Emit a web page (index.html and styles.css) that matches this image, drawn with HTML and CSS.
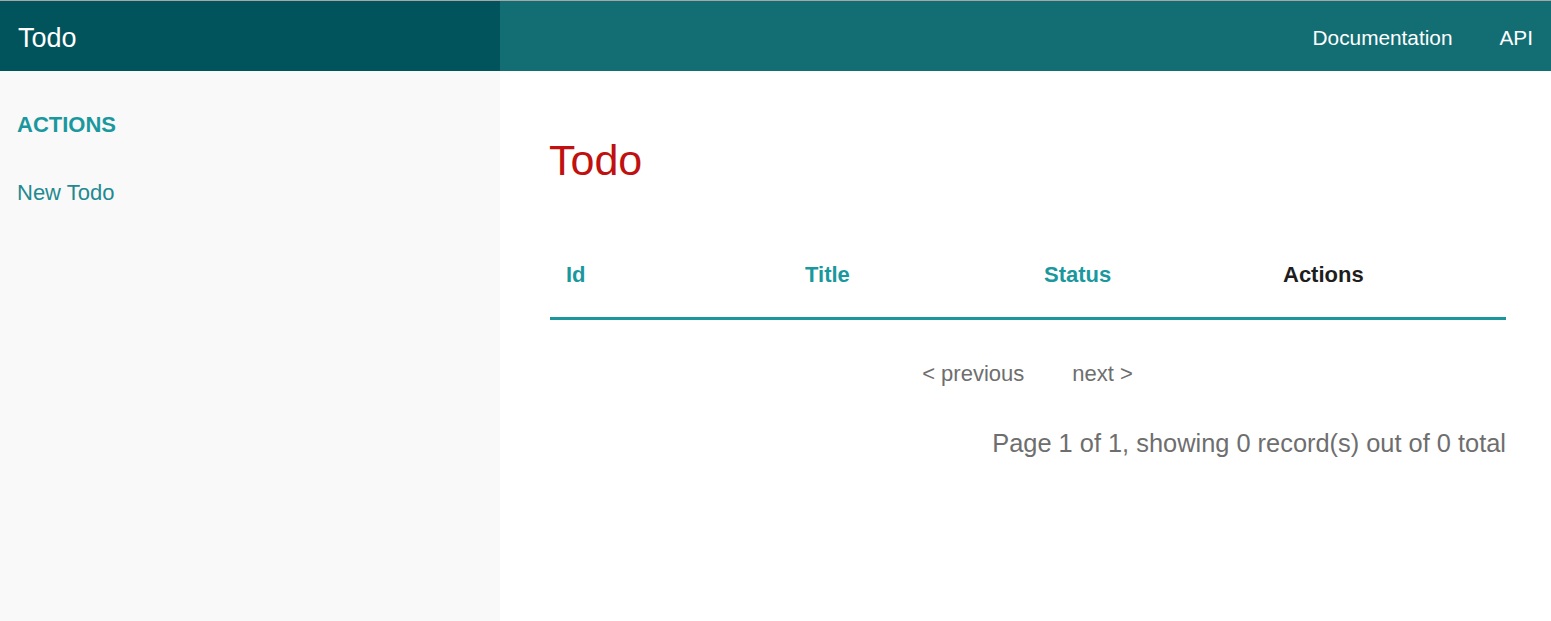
FILE: index.html
```html
<!DOCTYPE html>
<html lang="en">
<head>
<meta charset="utf-8">
<title>Todo</title>
<link rel="stylesheet" href="styles.css">
</head>
<body>
<div class="app">
  <header class="topbar">
    <div class="brand">Todo</div>
    <nav class="topnav">
      <a href="#">Documentation</a>
      <a href="#">API</a>
    </nav>
  </header>
  <div class="layout">
    <aside class="sidebar">
      <h3 class="side-title">ACTIONS</h3>
      <a class="side-link" href="#">New Todo</a>
    </aside>
    <main class="content">
      <h1 class="page-title">Todo</h1>
      <table class="grid">
        <thead>
          <tr>
            <th class="sortable">Id</th>
            <th class="sortable">Title</th>
            <th class="sortable">Status</th>
            <th>Actions</th>
          </tr>
        </thead>
        <tbody></tbody>
      </table>
      <div class="pager">
        <a href="#">&lt; previous</a>
        <a href="#">next &gt;</a>
      </div>
      <div class="summary">Page 1 of 1, showing 0 record(s) out of 0 total</div>
    </main>
  </div>
</div>
</body>
</html>
```

FILE: styles.css
```css
html, body {
  margin: 0;
  padding: 0;
  height: 100%;
}
body {
  font-family: "Liberation Sans", Arial, Helvetica, sans-serif;
  background: #ffffff;
  border-top: 1px solid #a6a6a6;
  box-sizing: border-box;
}
.app {
  display: flex;
  flex-direction: column;
  height: 620px;
}
.topbar {
  display: flex;
  height: 70px;
  background: #136e74;
  color: #ffffff;
}
.brand {
  width: 500px;
  box-sizing: border-box;
  background: #02545c;
  padding: 2px 0 0 18px;
  font-size: 27px;
  line-height: 70px;
}
.topnav {
  flex: 1;
  display: flex;
  justify-content: flex-end;
  align-items: center;
  gap: 47px;
  padding: 4px 18px 0 0;
}
.topnav a {
  color: #ffffff;
  text-decoration: none;
  font-size: 20.8px;
}
.layout {
  flex: 1;
  display: flex;
}
.sidebar {
  width: 500px;
  box-sizing: border-box;
  background: #f9f9f9;
  padding: 41px 17px 0;
  display: flex;
  flex-direction: column;
  align-items: flex-start;
}
.side-title {
  margin: 0;
  font-size: 22px;
  line-height: 26px;
  font-weight: bold;
  color: #1a989e;
}
.side-link {
  margin-top: 42px;
  font-size: 22px;
  line-height: 26px;
  color: #1f8a91;
  text-decoration: none;
}
.content {
  flex: 1;
  padding: 65px 45px 0 49px;
}
.page-title {
  margin: 0;
  font-size: 43px;
  line-height: 48px;
  font-weight: normal;
  color: #c0100f;
}
.grid {
  width: calc(100% - 1px);
  margin: 47px 0 0 1px;
  border-collapse: collapse;
  table-layout: fixed;
}
.grid th {
  text-align: left;
  font-size: 22px;
  line-height: 26px;
  font-weight: bold;
  color: #1e1e1e;
  padding: 31px 16px 29px;
  border-bottom: 3px solid #1a969c;
}
.grid th.sortable {
  color: #1a989e;
}
.pager {
  display: flex;
  justify-content: center;
  gap: 48px;
  margin-top: 41px;
  font-size: 22px;
  line-height: 26px;
}
.pager a {
  color: #6e6e6e;
  text-decoration: none;
}
.summary {
  margin-top: 42px;
  text-align: right;
  font-size: 25.4px;
  line-height: 29px;
  color: #6e6e6e;
}
```
